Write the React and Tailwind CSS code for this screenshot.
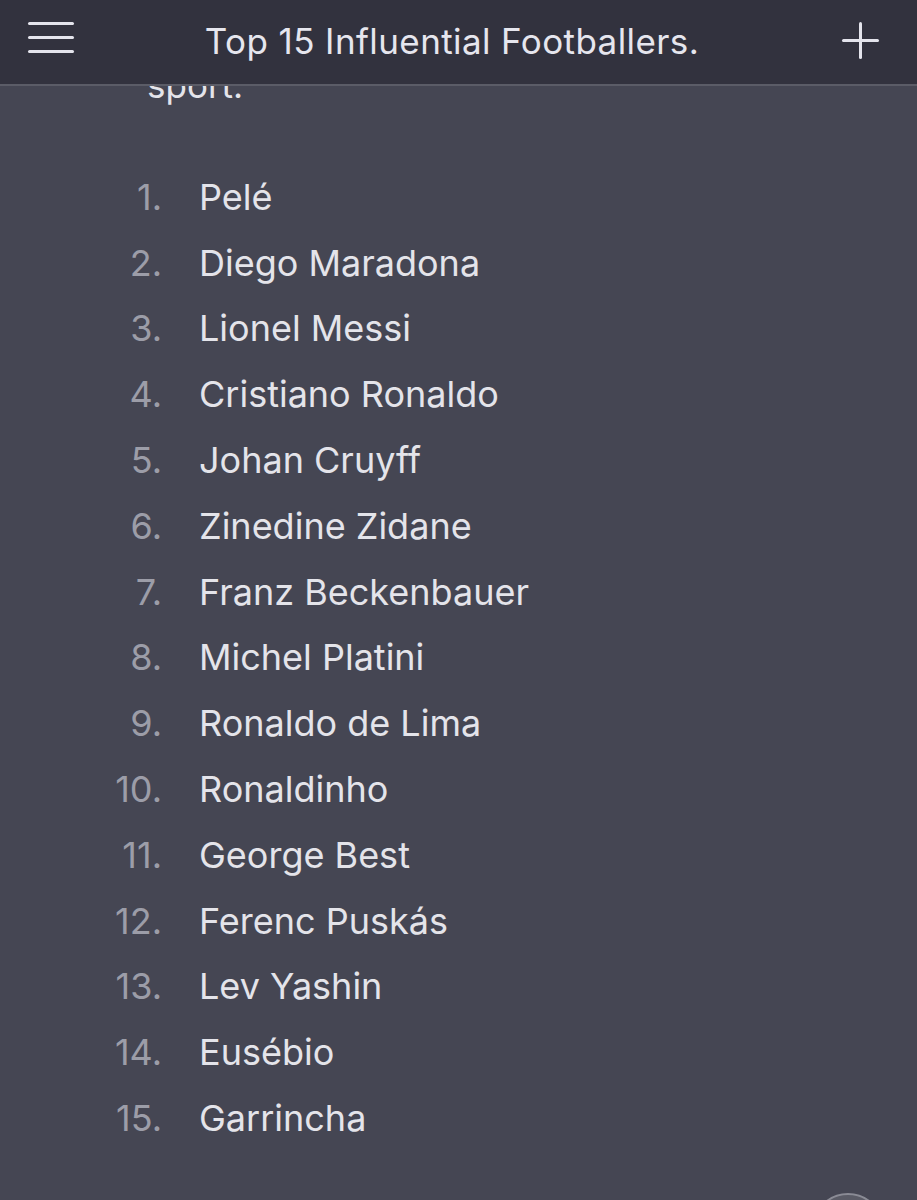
import React from "react";

const players = [
  "Pelé",
  "Diego Maradona",
  "Lionel Messi",
  "Cristiano Ronaldo",
  "Johan Cruyff",
  "Zinedine Zidane",
  "Franz Beckenbauer",
  "Michel Platini",
  "Ronaldo de Lima",
  "Ronaldinho",
  "George Best",
  "Ferenc Puskás",
  "Lev Yashin",
  "Eusébio",
  "Garrincha",
];

const App = () => {
  return (
    <div className="relative flex h-[1200px] w-[917px] flex-col overflow-hidden bg-[#454653] font-['Inter',sans-serif]">
      {/* top bar */}
      <header className="z-10 flex h-[86px] shrink-0 items-start justify-between border-b-2 border-[#5b5c67] bg-[#32323e] pl-[28px] pr-[38px]">
        <button type="button" className="mt-[22px] flex w-[46px] flex-col gap-[11px]">
          <span className="block h-[3px] w-full rounded bg-[#e4e4ec]" />
          <span className="block h-[3px] w-full rounded bg-[#e4e4ec]" />
          <span className="block h-[3px] w-full rounded bg-[#e4e4ec]" />
        </button>
        <h1 className="-ml-[12px] mt-[24px] text-[35px] font-normal leading-[35px] tracking-[0.4px] text-[#e6e6ee]">
          Top 15 Influential Footballers.
        </h1>
        <button type="button" className="relative mt-[22px] h-[37px] w-[37px]">
          <span className="absolute left-0 top-[17px] block h-[3px] w-full rounded bg-[#e4e4ec]" />
          <span className="absolute left-[17px] top-0 block h-full w-[3px] rounded bg-[#e4e4ec]" />
        </button>
      </header>

      {/* scrolled note content */}
      <main className="flex-1 overflow-hidden">
        <p className="-mt-[21px] pl-[147px] text-[35px] leading-[40px] text-[#e4e4ea]">sport.</p>
        <ol className="mt-[59px] flex flex-col">
          {players.map((name, i) => (
            <li key={name} className="flex h-[65.8px] items-center text-[36px]">
              <span className="w-[162px] text-right text-[#9c9da8]">{i + 1}.</span>
              <span className="pl-[37px] text-[#e4e4ea]">{name}</span>
            </li>
          ))}
        </ol>
      </main>

      {/* floating button peeking from bottom */}
      <div className="absolute left-[812px] top-[1193px] h-[72px] w-[72px] rounded-full border-2 border-[#8a8b95] bg-[#5a5b66]" />
    </div>
  );
};

export default App;
